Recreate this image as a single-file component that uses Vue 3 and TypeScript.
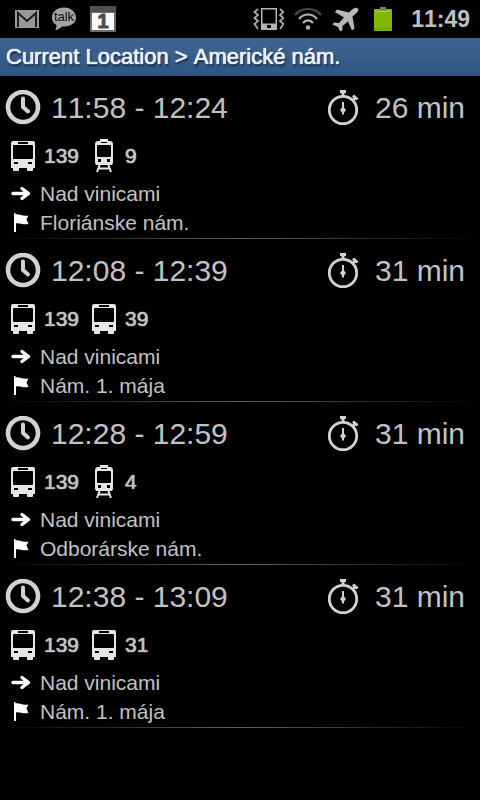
<script setup lang="ts">
type Vehicle = 'bus' | 'tram'

interface Leg {
  vehicle: Vehicle
  line: string
}

interface Trip {
  departure: string
  arrival: string
  duration: string
  legs: Leg[]
  direction: string
  stop: string
}

const trips: Trip[] = [
  {
    departure: '11:58',
    arrival: '12:24',
    duration: '26 min',
    legs: [{ vehicle: 'bus', line: '139' }, { vehicle: 'tram', line: '9' }],
    direction: 'Nad vinicami',
    stop: 'Floriánske nám.',
  },
  {
    departure: '12:08',
    arrival: '12:39',
    duration: '31 min',
    legs: [{ vehicle: 'bus', line: '139' }, { vehicle: 'bus', line: '39' }],
    direction: 'Nad vinicami',
    stop: 'Nám. 1. mája',
  },
  {
    departure: '12:28',
    arrival: '12:59',
    duration: '31 min',
    legs: [{ vehicle: 'bus', line: '139' }, { vehicle: 'tram', line: '4' }],
    direction: 'Nad vinicami',
    stop: 'Odborárske nám.',
  },
  {
    departure: '12:38',
    arrival: '13:09',
    duration: '31 min',
    legs: [{ vehicle: 'bus', line: '139' }, { vehicle: 'bus', line: '31' }],
    direction: 'Nad vinicami',
    stop: 'Nám. 1. mája',
  },
]
</script>

<template>
  <div class="screen">
    <div class="status">
      <div class="notifications">
        <svg width="24" height="18" viewBox="0 0 24 18" aria-hidden="true">
          <rect width="24" height="18" fill="#989898" />
          <path d="M3 17V3l9 8 9-8v14" fill="none" stroke="#1c1c1c" stroke-width="2" />
        </svg>
        <svg width="26" height="26" viewBox="0 0 26 26" aria-hidden="true">
          <path d="M13 1.500C6 1.500 1 5.500 1 11.500c0 3.500 1.500 6 4.500 7.500 0 2-.5 4-1.500 5.500 3-.8 5.500-2.500 7-4h2c7 0 12-3.500 12-9S20 1.500 13 1.500Z" fill="#a2a2a2" />
          <text class="talk" x="13" y="15" text-anchor="middle">talk</text>
        </svg>
        <svg width="28" height="28" viewBox="0 0 28 28" aria-hidden="true">
          <rect x="1" y="1" width="26" height="26" rx="1" fill="#6c6c6c" />
          <rect x="1" y="1" width="26" height="6" fill="#505050" />
          <rect x="3" y="8" width="22" height="17" fill="#fafafa" />
          <text class="day" x="14" y="23" text-anchor="middle">1</text>
        </svg>
      </div>
      <div class="indicators">
        <svg width="32" height="26" viewBox="0 0 32 26" aria-hidden="true">
          <path d="M9 2h16v22H9Z" fill="#b4b4b4" />
          <path d="M10.500 3.500h13v14h-13Z" fill="#000" />
          <rect x="15" y="19" width="4" height="3" fill="#000" />
          <path d="M6 3l-3.500 3L6 9l-3.500 3L6 15l-3.500 3L6 23M28 3l3.500 3L28 9l3.500 3L28 15l3.500 3L28 23" fill="none" stroke="#a8a8a8" stroke-width="1.800" />
        </svg>
        <svg width="28" height="24" viewBox="0 0 28 24" fill="none" stroke-width="2.200" aria-hidden="true">
          <path d="M1 8c7-8 19-8 26 0" stroke="#4c4c4c" />
          <path d="M5 12c5-6 13-6 18 0" stroke="#b4b4b4" />
          <path d="M9 16c3-3.500 7-3.500 10 0" stroke="#b4b4b4" />
          <circle cx="14" cy="20.500" r="2.200" fill="#b4b4b4" />
        </svg>
        <svg width="27" height="25" viewBox="0 0 27 25" aria-hidden="true">
          <path d="M26 1.500c-1.500-1.500-4-.7-5.500.7L17 5.500 5 2.500 3 5l9 5.500-5 5.500-5-.5L.5 17.500l5.500 2.500 2 4.500 2.500-1.500v-4l5.500-4.500L20 23.500l2.500-2L20.500 9.500 24.500 6C26 4.500 27 3 26 1.500Z" fill="#b8b8b8" />
        </svg>
        <svg class="battery" width="20" height="26" viewBox="0 0 20 26" aria-hidden="true">
          <rect x="7" y="1" width="6" height="4" rx="1" fill="#77727f" />
          <rect x="1" y="3" width="18" height="22" rx="1" fill="#82b800" />
          <rect x="7" y="1" width="6" height="3" rx="1" fill="#77727f" />
          <rect x="2" y="5" width="16" height="1" fill="#a5d52c" />
          <rect x="2" y="21" width="16" height="3" fill="#76aa00" />
        </svg>
        <time class="now">11:49</time>
      </div>
    </div>

    <header class="title">
      <h1>Current Location &gt; Americké nám.</h1>
    </header>

    <main>
      <ul class="trips">
        <li v-for="trip in trips" :key="trip.departure" class="trip">
          <div class="times">
            <svg width="36" height="36" viewBox="0 0 36 36" fill="none" stroke="#d2d2d2" aria-hidden="true">
              <circle cx="18" cy="17" r="15" stroke-width="4.600" />
              <path d="M18 8.500v8.500l5 4.500" stroke-width="4" stroke-linecap="round" stroke-linejoin="round" />
            </svg>
            <span class="span">{{ trip.departure }} - {{ trip.arrival }}</span>
            <svg width="32" height="38" viewBox="0 0 32 38" fill="none" stroke="#d2d2d2" aria-hidden="true">
              <circle cx="15" cy="21" r="13.700" stroke-width="2.800" />
              <path d="M12 2.500h6M15 3v5" stroke-width="3" />
              <path d="M24 12l3-3" stroke-width="3" />
              <path d="M25 6.500l4.500 4" stroke-width="3" />
              <path d="M14 13h2v5.500l2 2.500-2 2.500v2h-2v-2L12 21l2-2.500Z" fill="#d2d2d2" stroke="none" />
            </svg>
            <span class="duration">{{ trip.duration }}</span>
          </div>

          <div class="legs">
            <span v-for="leg in trip.legs" :key="leg.line" class="leg">
              <svg v-if="leg.vehicle === 'bus'" width="24" height="34" viewBox="0 0 24 34" role="img" aria-label="Bus">
                <path d="M2 2h20q2 0 2 2v25h-2v2q0 1-1 1h-4q-1 0-1-1v-2H8v2q0 1-1 1H3q-1 0-1-1v-2H0V4q0-2 2-2Z" fill="#e6e6e6" />
                <path d="M7 3h10v2H7ZM3 6h18q1 0 1 1v12q0 1-1 1H3q-1 0-1-1V7q0-1 1-1ZM3 23h4v2H3ZM17 23h4v2h-4Z" fill="#000" />
              </svg>
              <svg v-else width="24" height="34" viewBox="0 0 24 34" role="img" aria-label="Tram">
                <path d="M8 0h8v3h-2v-1h-4v1H8Z" fill="#e6e6e6" />
                <path d="M5 2h14q2 1 2 3v18q0 3-2 3H5q-2 0-2-3V5q0-2 2-3Z" fill="#e6e6e6" />
                <path d="M9 3h6v1H9ZM6 6h12q1 0 1 1v10q0 1-1 1H6q-1 0-1-1V7q0-1 1-1ZM6 20h3v3H6ZM15 20h3v3h-3Z" fill="#000" />
                <path d="M8 25l-3 8M16 25l3 8M7 29.500h10" fill="none" stroke="#e6e6e6" stroke-width="2" />
              </svg>
              <span class="line">{{ leg.line }}</span>
            </span>
          </div>

          <div class="detail">
            <svg width="20" height="20" viewBox="0 0 20 20" aria-hidden="true">
              <path d="M2 9.500h15M11 4.500l6.500 5-6.500 5" fill="none" stroke="#fff" stroke-width="3.400" stroke-linecap="round" stroke-linejoin="round" />
            </svg>
            <span>{{ trip.direction }}</span>
          </div>
          <div class="detail">
            <svg width="20" height="20" viewBox="0 0 20 20" aria-hidden="true">
              <path d="M3 0h1.500v1.500c4-1 6 2 13 1L15.500 6.500l2 4.500c-6 1.200-9-1.500-12.500-.5v8.500H3Z" fill="#fff" />
            </svg>
            <span>{{ trip.stop }}</span>
          </div>
        </li>
      </ul>
    </main>
  </div>
</template>

<style>
body {
  background: #000;
}
</style>

<style scoped>
.screen {
  min-height: 100vh;
  background: #000;
  color: #c2c2c2;
  font-family: "Liberation Sans", Arial, sans-serif;
  font-kerning: none;
}

svg {
  display: block;
  flex: none;
}

.status {
  display: flex;
  align-items: center;
  justify-content: space-between;
  height: 38px;
  padding: 0 10px 0 15px;
}

.notifications {
  display: flex;
  align-items: center;
  gap: 12px;
}

.talk {
  font-size: 13px;
  fill: #111;
}

.day {
  font-size: 20px;
  font-weight: bold;
  fill: #4c4c4c;
  stroke: #4c4c4c;
}

.indicators {
  display: flex;
  align-items: center;
  gap: 10px;
}

.battery {
  margin-left: 4px;
}

.now {
  margin-left: 8px;
  color: #bebebe;
  font-size: 23px;
  font-weight: bold;
}

.title {
  display: flex;
  align-items: center;
  height: 38px;
  padding: 0 6px;
  background: linear-gradient(#40658f, #2f5584);
}

h1 {
  margin: 0;
  color: #e8f1fa;
  font-size: 22px;
  font-weight: normal;
  line-height: 38px;
  text-shadow: 0 0 1px #e8f1fa, 0 0 1px #e8f1fa, 1px 2px 2px #0c1c30;
}

.trips {
  margin: 0;
  padding: 0;
  list-style: none;
}

.trip {
  padding: 10px 0 2px;
  background: linear-gradient(90deg, #000, #606060 50%, #000) bottom / 100% 1px no-repeat;
}

.times {
  display: flex;
  align-items: center;
  height: 44px;
  padding: 0 15px 0 5px;
  font-size: 30px;
}

.span {
  flex: 1;
  margin-left: 10px;
}

.duration {
  margin-left: 15px;
}

.legs {
  display: flex;
  gap: 13px;
  margin: 8px 0 5px;
  padding-left: 11px;
}

.leg {
  display: flex;
  align-items: center;
  gap: 9px;
  height: 36px;
}

.line {
  font-size: 21px;
  text-shadow: 0 0 1px #c2c2c2, 0 0 1px #c2c2c2;
}

.detail {
  display: flex;
  align-items: center;
  gap: 9px;
  padding-left: 11px;
  font-size: 21px;
  line-height: 29px;
}
</style>
